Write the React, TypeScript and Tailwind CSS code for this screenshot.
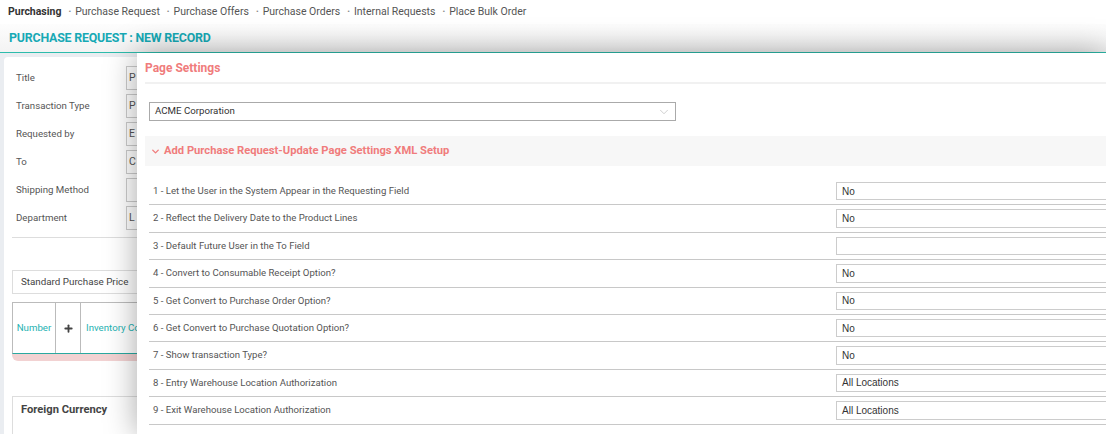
import React from 'react';
import { ChevronDown, Plus } from 'lucide-react';

const navLinks = ['Purchase Request', 'Purchase Offers', 'Purchase Orders', 'Internal Requests', 'Place Bulk Order'];

const formRows = [
  { label: 'Title', value: 'P' },
  { label: 'Transaction Type', value: 'P' },
  { label: 'Requested by', value: 'E' },
  { label: 'To', value: 'C' },
  { label: 'Shipping Method', value: '' },
  { label: 'Department', value: 'L' },
];

const settings = [
  { label: '1 - Let the User in the System Appear in the Requesting Field', value: 'No' },
  { label: '2 - Reflect the Delivery Date to the Product Lines', value: 'No' },
  { label: '3 - Default Future User in the To Field', value: '' },
  { label: '4 - Convert to Consumable Receipt Option?', value: 'No' },
  { label: '5 - Get Convert to Purchase Order Option?', value: 'No' },
  { label: '6 - Get Convert to Purchase Quotation Option?', value: 'No' },
  { label: '7 - Show transaction Type?', value: 'No' },
  { label: '8 - Entry Warehouse Location Authorization', value: 'All Locations' },
  { label: '9 - Exit Warehouse Location Authorization', value: 'All Locations' },
];

const App: React.FC = () => {
  return (
    <div className="relative w-[1106px] h-[434px] overflow-hidden bg-[#eaedf1] font-['Roboto',sans-serif]">
      {/* top breadcrumb nav */}
      <div className="h-[24px] bg-white flex items-center pl-2 text-[10.5px] text-[#555]">
        <span className="font-bold text-[#333]">Purchasing</span>
        {navLinks.map((link) => (
          <span key={link} className="flex items-center">
            <span className="ml-[7px] mr-[4px] text-[8px] text-[#888]">•</span>
            <span>{link}</span>
          </span>
        ))}
      </div>

      {/* page header */}
      <div className="h-[29px] bg-gradient-to-b from-[#fdfdfd] to-[#f3f3f3] border-b-[1.5px] border-[#2dbcac] flex items-center pl-[9px]">
        <span className="text-[12.4px] font-bold text-[#17a9b5] tracking-[-0.2px]">PURCHASE REQUEST : NEW RECORD</span>
      </div>

      {/* underlying form */}
      <div className="ml-[4px] mt-[4px] w-[400px] h-[400px] bg-white rounded-sm px-2 pt-[7px]">
        {formRows.map((row) => (
          <div key={row.label} className="h-7 flex items-center pl-1">
            <span className="w-[110px] shrink-0 text-[9.7px] text-[#555]">{row.label}</span>
            <div className="h-[24px] w-[60px] border border-[#ccc] flex items-center pl-[2px] text-[10.5px] text-[#555]">
              {row.value}
            </div>
          </div>
        ))}
        <div className="mt-[5px] border-t border-[#ddd]" />
        <div className="mt-[32px] h-[24px] border border-[#ddd] flex items-center pl-[8px] text-[9.8px] text-[#444]">
          Standard Purchase Price
        </div>
        <div className="mt-[8px] h-[52px] flex border-x border-t border-[#bbb] border-b-[1.5px] border-b-[#2aa9a0]">
          <div className="w-[43px] border-r border-[#bbb] flex items-center justify-center text-[9.7px] text-[#1fb2b2]">Number</div>
          <div className="w-[25px] border-r border-[#bbb] flex items-center justify-center">
            <Plus className="w-[11px] h-[11px] text-[#444]" strokeWidth={4} />
          </div>
          <div className="flex items-center pl-[5px] text-[9.7px] text-[#1fb2b2]">Inventory Code</div>
        </div>
        <div className="h-[7px] bg-[#f2d2d2] rounded-b-md" />
        <div className="mt-[35px] h-[60px] border border-[#ddd] pl-[8px] pt-[5px] text-[11.2px] font-bold text-[#444]">
          Foreign Currency
        </div>
      </div>

      {/* page settings modal overlay */}
      <div className="absolute left-[137px] top-[53px] right-0 bottom-0 bg-white shadow-[0_0_30px_rgba(0,0,0,0.35)]">
        <div className="ml-2 h-[31px] flex items-center border-b-2 border-[#f1f1f1]">
          <span className="text-[12px] font-bold text-[#f07c7c]">Page Settings</span>
        </div>

        <div className="ml-3 mt-[18px] w-[527px] h-[19px] border border-[#aaa] flex items-center justify-between pl-[5px] pr-[4px]">
          <span className="text-[9.7px] text-[#333]">ACME Corporation</span>
          <ChevronDown className="w-[14px] h-[14px] text-[#bbb]" strokeWidth={1.2} />
        </div>

        <div className="ml-2 mt-[15px] h-[30px] bg-[#f7f7f7] flex items-center pl-[5px]">
          <ChevronDown className="w-[11px] h-[11px] text-[#f07c7c]" strokeWidth={3} />
          <span className="ml-[3px] text-[11.2px] font-bold text-[#f07c7c]">
            Add Purchase Request-Update Page Settings XML Setup
          </span>
        </div>

        <div className="ml-3 mt-[12px]">
          {settings.map((s) => (
            <div key={s.label} className="h-[27.4px] border-b border-[#c8c8c8] flex items-center">
              <span className="w-[687px] shrink-0 pl-1 text-[9.6px] text-[#555]">{s.label}</span>
              <div className="w-[300px] shrink-0 h-[18.5px] border border-[#ccc] flex items-center pl-[5px] font-['Liberation_Sans',Arial,sans-serif] text-[10px] text-[#333]">
                {s.value}
              </div>
            </div>
          ))}
        </div>
      </div>
    </div>
  );
};

export default App;
